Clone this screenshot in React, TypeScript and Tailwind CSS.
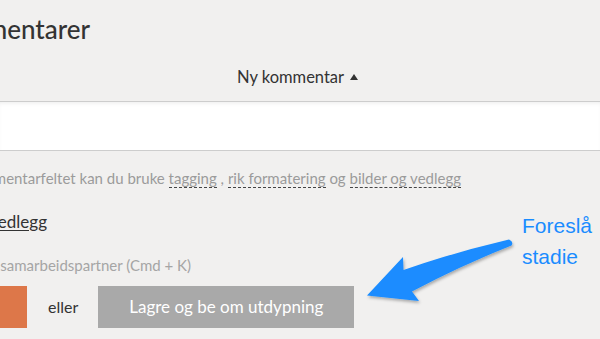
import React from 'react'

const FONT = "font-['Lato','Noto_Sans',sans-serif]"

function Arrow() {
  return (
    <svg className="absolute left-0 top-0 pointer-events-none" width="600" height="339" viewBox="0 0 600 339">
      <defs>
        <filter id="sh" x="-20%" y="-20%" width="140%" height="140%">
          <feDropShadow dx="1" dy="2" stdDeviation="1.5" floodColor="#000" floodOpacity="0.3" />
        </filter>
      </defs>
      <path
        d="M 509 239.5 Q 455 252 403.5 270 L 403 257 L 367 295.5 L 419 301 L 412 291.5 Q 460 266 511.5 245.5 Q 514 242 509 239.5 Z"
        fill="#1a8cff"
        filter="url(#sh)"
      />
    </svg>
  )
}

export default function App() {
  return (
    <div className={`relative w-[600px] h-[339px] overflow-hidden bg-[#f1f0ef] text-[#333] ${FONT}`}>
      {/* header */}
      <div className="h-[101px] flex flex-col">
        <div className="mt-[13px] w-[90px] flex justify-end">
          <h1 className="shrink-0 text-[26px] leading-[32px] font-medium text-[#333] whitespace-nowrap">Kommentarer</h1>
        </div>
        <div className="mt-[21px] ml-[237px] flex items-center gap-[6px] text-[16.5px] leading-[22px] whitespace-nowrap">
          <span>Ny kommentar</span>
          <span className="w-0 h-0 border-x-[4.5px] border-x-transparent border-b-[6px] border-b-[#333] -mt-[1px]" />
        </div>
      </div>

      {/* editor */}
      <div className="h-[50px] bg-white border-y border-[#cdcdcd] shadow-[inset_0_3px_4px_-2px_rgba(0,0,0,0.08)]" />

      {/* hint */}
      <div className="mt-[17px] w-[461px] flex justify-end">
        <div className="shrink-0 flex items-center text-[15px] leading-[20px] text-[#9b9b9b] whitespace-nowrap">
          <span>I kommentarfeltet kan du bruke&nbsp;</span>
          <span className="border-b border-dashed border-[#444] leading-[18px]">tagging</span>
          <span>&nbsp;,&nbsp;</span>
          <span className="border-b border-dashed border-[#444] leading-[18px]">rik formatering</span>
          <span>&nbsp;og&nbsp;</span>
          <span className="border-b border-dashed border-[#444] leading-[18px]">bilder og vedlegg</span>
        </div>
      </div>

      <div className="mt-[23px] w-[47px] flex justify-end">
        <span className="shrink-0 text-[17px] leading-[22px] whitespace-nowrap underline underline-offset-2">Legg ved vedlegg</span>
      </div>

      <div className="mt-[22px] w-[191px] flex justify-end">
        <span className="shrink-0 text-[15px] leading-[20px] text-[#a5a5a5] whitespace-nowrap">Nevn en samarbeidspartner (Cmd + K)</span>
      </div>

      <div className="mt-[11px] flex items-center h-[42px]">
        <div className="w-[27px] h-full bg-[#dd7749]" />
        <span className="ml-[21px] text-[16px]">eller</span>
        <button className="ml-[20px] w-[256px] h-full bg-[#a9a9a9] text-white text-[17px]">
          Lagre og be om utdypning
        </button>
      </div>

      {/* annotation */}
      <div className="absolute left-[522px] top-[210px] font-['Liberation_Sans',Arial,sans-serif] text-[21px] leading-[31px] text-[#1a8cff] whitespace-nowrap">
        <div>Foreslå</div>
        <div>stadie</div>
      </div>
      <Arrow />
    </div>
  )
}
